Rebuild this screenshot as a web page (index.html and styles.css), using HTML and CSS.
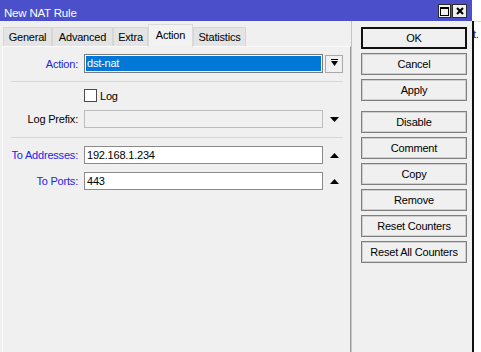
FILE: index.html
```html
<!DOCTYPE html>
<html>
<head>
<meta charset="utf-8">
<link rel="stylesheet" href="styles.css">
</head>
<body>
<div class="screen">
  <div class="window">
    <div class="titlebar">
      <span class="title">New NAT Rule</span>
      <div class="tb-buttons">
        <span class="tb-btn tb-max"><svg width="9" height="9" viewBox="0 0 9 9"><rect x="0.5" y="0.5" width="8" height="8" fill="none" stroke="#000"/><rect x="0" y="0" width="9" height="2" fill="#000"/></svg></span>
        <span class="tb-btn tb-close"><svg width="8" height="8" viewBox="0 0 8 8"><path d="M1 1L7 7M7 1L1 7" stroke="#000" stroke-width="2"/></svg></span>
      </div>
    </div>
    <div class="body">
      <div class="left">
        <div class="tabs">
          <span class="tab tab-general">General</span>
          <span class="tab tab-advanced">Advanced</span>
          <span class="tab tab-extra">Extra</span>
          <span class="tab tab-action active">Action</span>
          <span class="tab tab-stats">Statistics</span>
        </div>
        <div class="panel">
          <div class="row row-action">
            <span class="lbl blue">Action:</span>
            <span class="field selected"><span class="sel-text">dst-nat</span></span>
            <span class="dd-btn"><svg width="7" height="9" viewBox="0 0 7 9"><rect x="0" y="0" width="7" height="1" fill="#000"/><path d="M0 2H7L3.5 7Z" fill="#000"/></svg></span>
          </div>
          <div class="sep sep-1"></div>
          <div class="row row-check">
            <span class="lbl"></span>
            <span class="check"><span class="box"></span>Log</span>
          </div>
          <div class="row row-prefix">
            <span class="lbl">Log Prefix:</span>
            <span class="field disabled"></span>
            <span class="arrow"><svg width="9" height="5" viewBox="0 0 9 5"><path d="M0 0H9L4.5 5Z" fill="#000"/></svg></span>
          </div>
          <div class="sep sep-2"></div>
          <div class="row row-addr">
            <span class="lbl blue">To Addresses:</span>
            <span class="field">192.168.1.234</span>
            <span class="arrow"><svg width="9" height="5" viewBox="0 0 9 5"><path d="M0 5H9L4.5 0Z" fill="#000"/></svg></span>
          </div>
          <div class="row row-ports">
            <span class="lbl blue">To Ports:</span>
            <span class="field">443</span>
            <span class="arrow"><svg width="9" height="5" viewBox="0 0 9 5"><path d="M0 5H9L4.5 0Z" fill="#000"/></svg></span>
          </div>
        </div>
      </div>
      <div class="right">
        <span class="btn default">OK</span>
        <span class="btn">Cancel</span>
        <span class="btn">Apply</span>
        <span class="btn gap">Disable</span>
        <span class="btn">Comment</span>
        <span class="btn">Copy</span>
        <span class="btn">Remove</span>
        <span class="btn">Reset Counters</span>
        <span class="btn">Reset All Counters</span>
      </div>
    </div>
  </div>
  <div class="outside"><span class="peek">t.</span></div>
</div>
</body>
</html>
```

FILE: styles.css
```css
* { box-sizing: border-box; }
html, body { margin: 0; padding: 0; }
body {
  background: #ffffff;
  font-family: "Liberation Sans", Arial, sans-serif;
  font-size: 11px;
  letter-spacing: -0.2px;
  color: #000;
}
.screen {
  display: flex;
  width: 481px;
  height: 352px;
  overflow: hidden;
}
.window {
  width: 474px;
  display: flex;
  flex-direction: column;
  flex: none;
}
.titlebar {
  width: 472px;
  height: 21px;
  background: #4b4fc9;
  color: #fff;
  display: flex;
  justify-content: space-between;
  align-items: flex-start;
  flex: none;
}
.title {
  padding: 7px 0 0 4px;
  line-height: 13px;
  font-size: 11.5px;
}
.tb-buttons {
  display: flex;
  gap: 1px;
  margin: 4px 5px 0 0;
}
.tb-btn {
  height: 14px;
  background: #f0f0f0;
  border: 1px solid #2a2a2a;
  display: flex;
  align-items: center;
  justify-content: center;
}
.tb-max { width: 13px; }
.tb-close { width: 15px; }
.body {
  flex: 1;
  display: grid;
  grid-template-columns: 351px 1fr;
  background: #f0f0f0;
  border-right: 2px solid #111;
}
.left {
  display: flex;
  flex-direction: column;
}
.tabs {
  display: flex;
  align-items: flex-end;
  height: 25px;
  padding-left: 3px;
  position: relative;
  z-index: 1;
}
.tab {
  height: 19px;
  padding: 3px 0 0 0;
  line-height: 13px;
  text-align: center;
  background: #e4e4e4;
  border: 1px solid #d6d6d6;
  border-bottom: none;
  white-space: nowrap;
}
.tab-general { width: 49px; }
.tab-advanced { width: 61px; }
.tab-extra { width: 35px; }
.tab-action { width: 45px; }
.tab-stats { width: 53px; }
.tab.active {
  height: 23px;
  margin-bottom: -1px;
  padding-top: 4px;
  background: #f2f2f2;
  border-color: #dadada;
}
.panel {
  flex: 1;
  margin-left: 2px;
  border-top: 1px solid #fbfbfb;
  border-left: 1px solid #fbfbfb;
  border-right: 1px solid #9c9c9c;
  padding-top: 7px;
  display: flex;
  flex-direction: column;
}
.row {
  display: grid;
  grid-template-columns: 75px 239px 20px;
  column-gap: 6px;
  align-items: center;
  height: 18px;
}
.row-action { height: 19px; }
.row-check { height: 13px; margin-top: 7px; }
.row-prefix { margin-top: 8px; }
.row-addr { margin-top: 8px; }
.row-ports { margin-top: 8px; }
.lbl {
  text-align: right;
  white-space: nowrap;
}
.blue { color: #2323e8; }
.field {
  height: 18px;
  background: #fff;
  border: 1px solid #8a8a8a;
  padding: 0 2px;
  line-height: 16px;
  white-space: nowrap;
}
.row-action .field { height: 19px; }
.field.selected {
  padding: 1px;
  border-color: #7a7a7a;
}
.sel-text {
  display: block;
  height: 15px;
  background: #0078d7;
  color: #fff;
  line-height: 15px;
  padding-left: 1px;
}
.field.disabled {
  background: #f0f0f0;
  border-color: #bcbcbc;
}
.dd-btn {
  width: 18px;
  height: 18px;
  margin-left: -4px;
  border: 1px solid #a8a8a8;
  background: #f0f0f0;
  display: flex;
  align-items: center;
  justify-content: center;
}
.arrow {
  display: flex;
  align-items: center;
  justify-content: flex-start;
  padding-left: 1px;
}
.sep {
  height: 1px;
  background: #d7d7d7;
  margin: 0 7px 0 8px;
}
.sep-1 { margin-top: 8px; }
.sep-2 { margin-top: 9px; }
.check {
  display: flex;
  align-items: center;
  gap: 3px;
}
.box {
  width: 13px;
  height: 13px;
  background: #fff;
  border: 1px solid #4a4a4a;
}
.right {
  display: flex;
  flex-direction: column;
  gap: 4px;
  padding: 6px 0 0 9px;
  border-left: 1px solid #c4c4c4;
}
.btn {
  width: 106px;
  height: 22px;
  border: 1px solid #7f7f7f;
  box-shadow: inset 0 0 0 1px #cfcfcf;
  background: #f0f0f0;
  display: flex;
  align-items: center;
  justify-content: center;
  white-space: nowrap;
}
.btn.default {
  border: 2px solid #111;
  box-shadow: none;
}
.btn.gap { margin-top: 6px; }
.outside {
  flex: 1;
  background: #fff;
  border-top: 1px solid #ddd;
  margin-top: 21px;
  position: relative;
  overflow: hidden;
}
.peek {
  position: absolute;
  left: -1px;
  top: 6px;
  color: #1a2a6a;
}
```
